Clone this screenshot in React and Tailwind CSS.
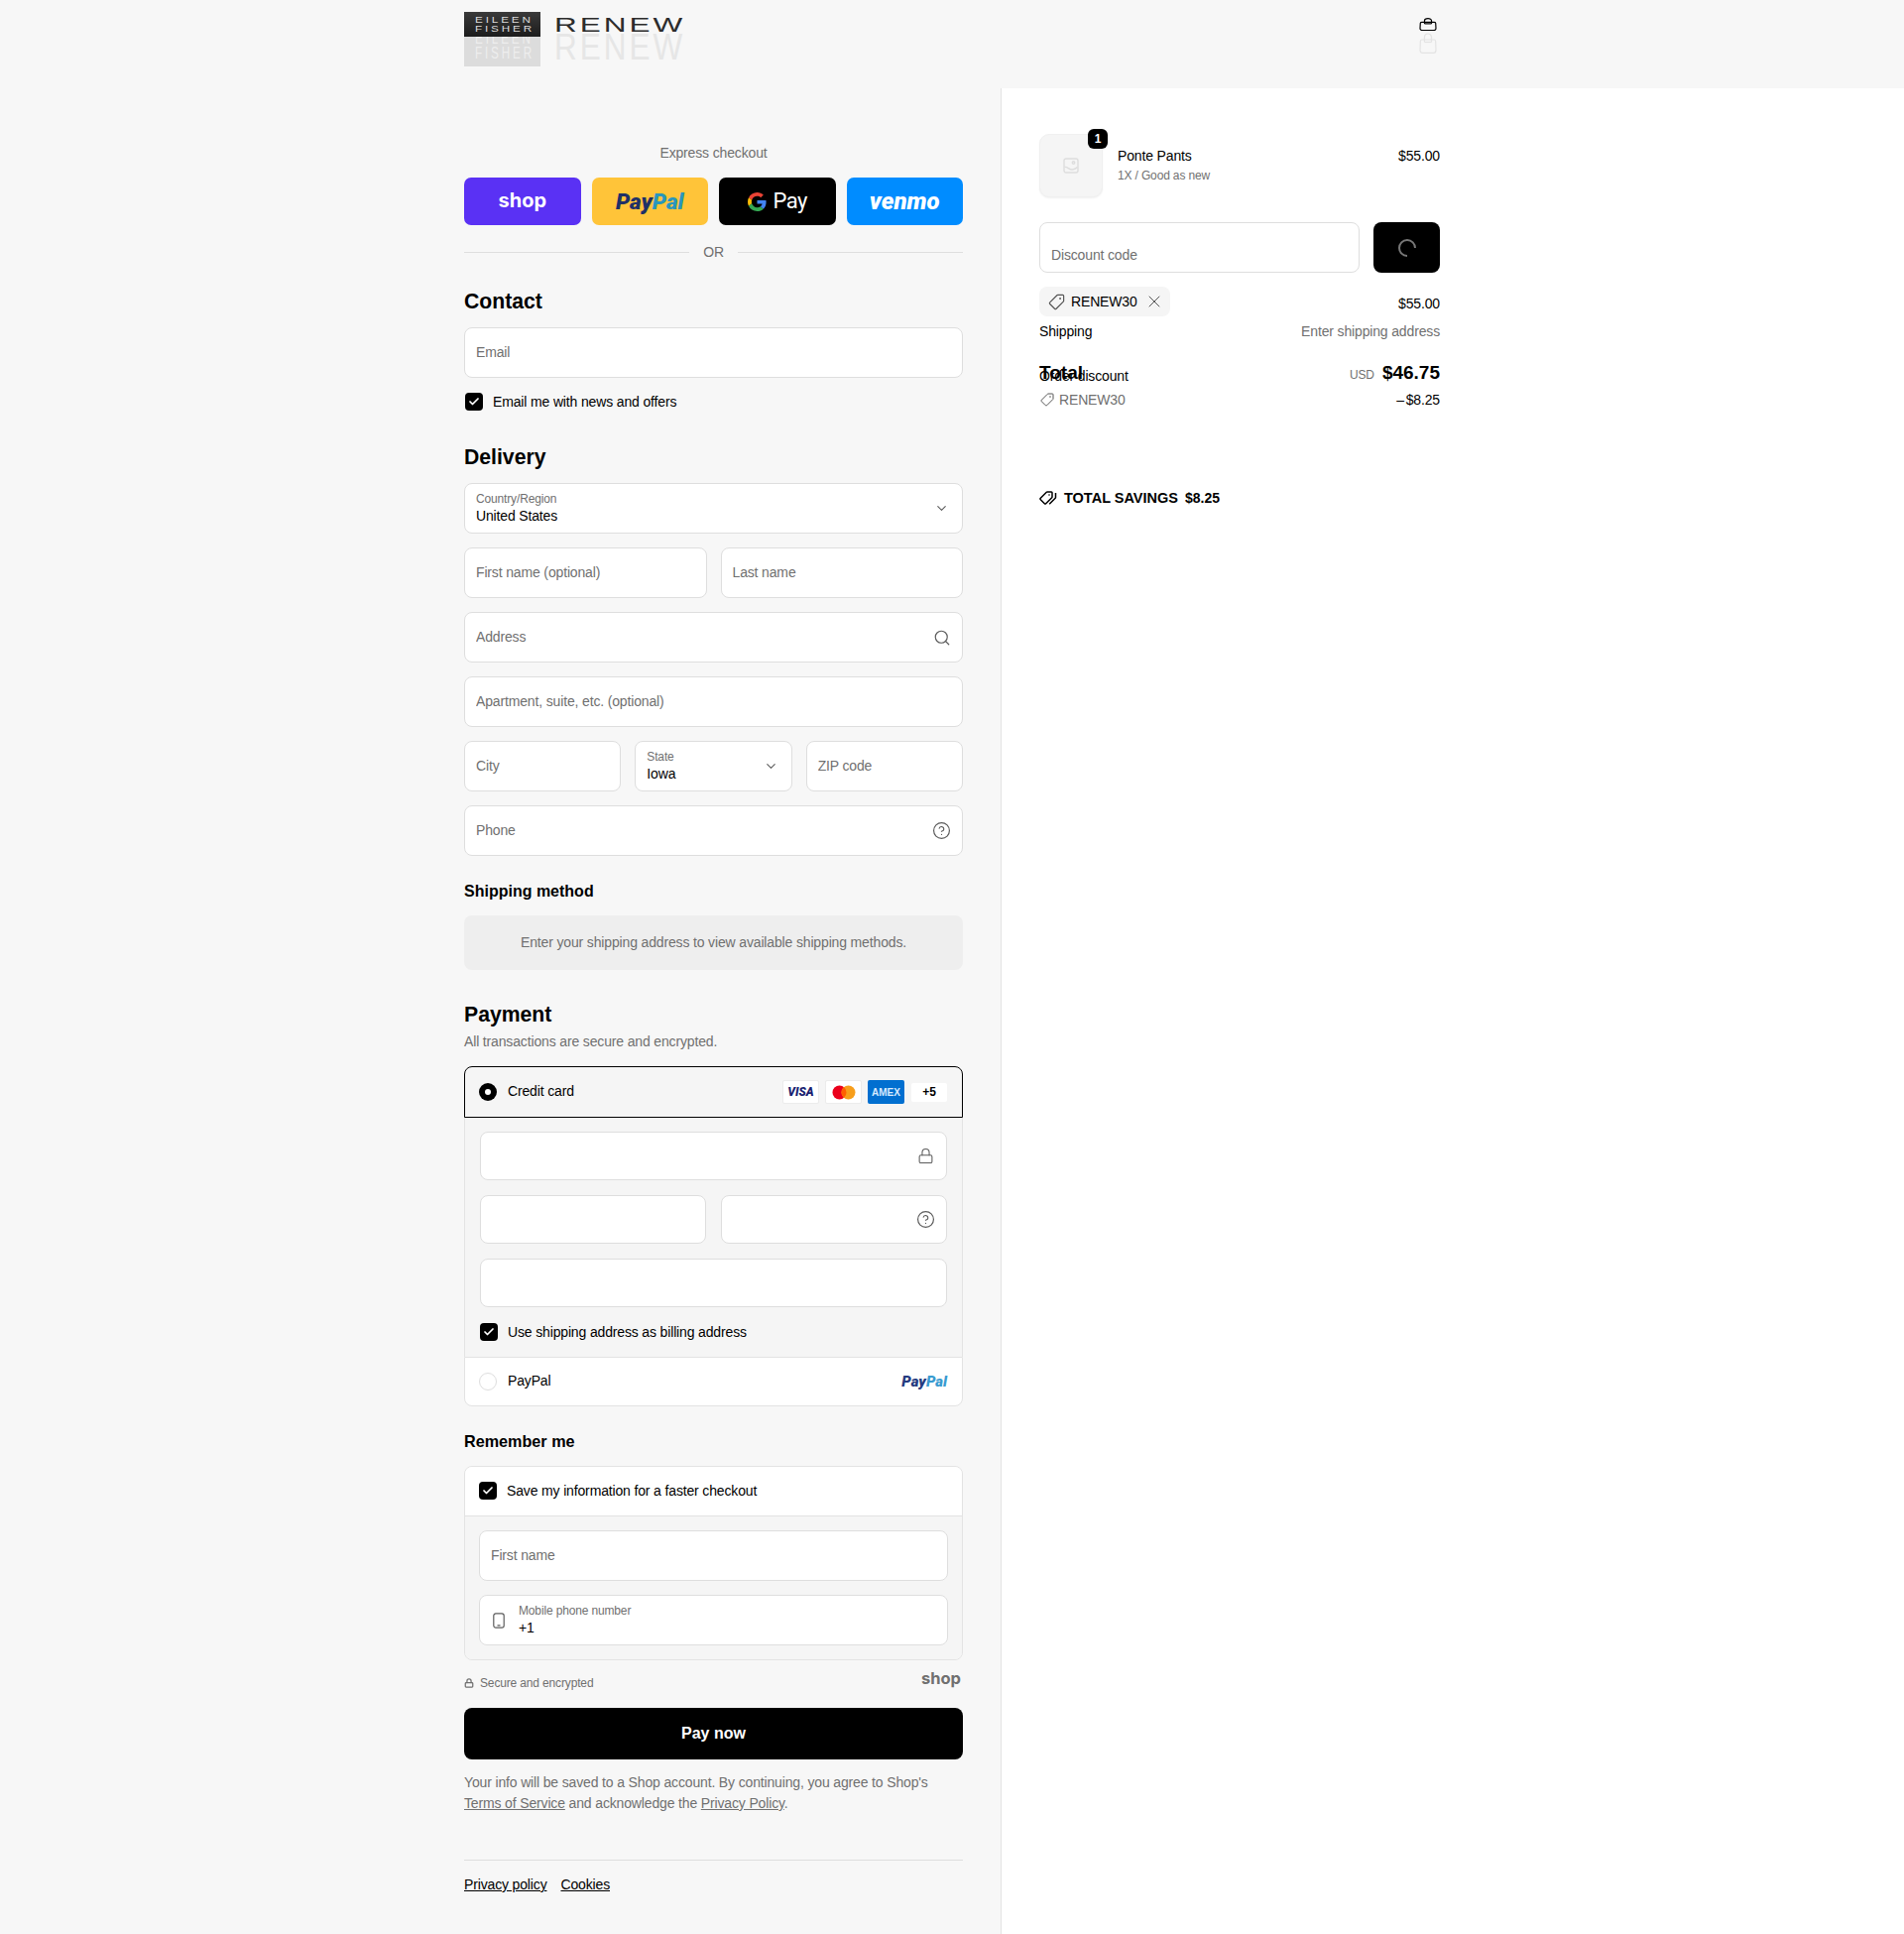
import { Check, ChevronDown, CircleHelp, Lock, Search, X } from "lucide-react";

function TagIcon({ className }) {
  return (
    <svg viewBox="0 0 16 16" fill="none" stroke="currentColor" strokeWidth="1" className={className}>
      <path d="M9 2h4.2a.8.8 0 0 1 .8.8V7a1 1 0 0 1-.3.7l-6 6a1 1 0 0 1-1.4 0L2.3 9.7a1 1 0 0 1 0-1.4l6-6A1 1 0 0 1 9 2z" />
      <circle cx="11" cy="5" r="0.8" fill="currentColor" stroke="none" />
    </svg>
  );
}

function BagIcon({ className }) {
  return (
    <svg viewBox="0 0 18 21" preserveAspectRatio="none" fill="none" stroke="currentColor" strokeWidth="1.2" className={className}>
      <path vectorEffect="non-scaling-stroke" d="M3 7h12c1 0 1.6.6 1.7 1.5l.3 9c0 1.6-1 2.9-2.5 2.9h-11C2 20.4 1 19.1 1 17.5l.3-9C1.4 7.6 2 7 3 7z" />
      <path vectorEffect="non-scaling-stroke" d="M5.5 9.5V4.5a3.5 3.5 0 0 1 7 0v5" />
      <path vectorEffect="non-scaling-stroke" d="M5.5 9.5h7" />
    </svg>
  );
}

function GoogleG() {
  return (
    <svg viewBox="0 0 48 48" className="h-[19px] w-[19px]">
      <path fill="#EA4335" d="M24 9.5c3.54 0 6.71 1.22 9.21 3.6l6.85-6.85C35.9 2.38 30.47 0 24 0 14.62 0 6.51 5.38 2.56 13.22l7.98 6.19C12.43 13.72 17.74 9.5 24 9.5z" />
      <path fill="#4285F4" d="M46.98 24.55c0-1.57-.15-3.09-.38-4.55H24v9.02h12.94c-.58 2.96-2.26 5.48-4.78 7.18l7.73 6c4.51-4.18 7.09-10.36 7.09-17.65z" />
      <path fill="#FBBC05" d="M10.53 28.59c-.48-1.45-.76-2.99-.76-4.59s.27-3.14.76-4.59l-7.98-6.19C.92 16.46 0 20.12 0 24c0 3.88.92 7.54 2.56 10.78l7.97-6.19z" />
      <path fill="#34A853" d="M24 48c6.48 0 11.93-2.13 15.89-5.81l-7.73-6c-2.15 1.45-4.92 2.3-8.16 2.3-6.26 0-11.57-4.22-13.47-9.91l-7.98 6.19C6.51 42.62 14.62 48 24 48z" />
    </svg>
  );
}

function Logo() {
  return (
    <div className="relative h-[55px] w-[225px] overflow-hidden tracking-normal">
      {/* faded copy sits behind the real logo */}
      <div className="absolute left-0 top-0 h-[55px] w-[77px] bg-[#dcdcdc]" />
      <span className="absolute left-[11px] top-[19px] origin-top-left scale-x-[1.3] scale-y-[1.8] text-[9px] leading-[9px] tracking-[2.2px] text-[#eeeeee]">EILEEN</span>
      <span className="absolute left-[11px] top-[34px] origin-top-left scale-x-[1.3] scale-y-[1.8] text-[9px] leading-[9px] tracking-[2.2px] text-[#eeeeee]">FISHER</span>
      <span className="absolute left-[91px] top-[16px] origin-top-left scale-x-[1.5] scale-y-[1.8] text-[21px] leading-[21px] tracking-[2px] text-[#e6e6e6]">RENEW</span>
      <div className="absolute left-0 top-0 h-[25px] w-[77px] bg-gradient-to-b from-[#3a3a3a] to-[#1c1c1c]" />
      <span className="absolute left-[11px] top-[4px] origin-top-left scale-x-[1.3] text-[9px] leading-[9px] tracking-[2.2px] text-[#dddddd]">EILEEN</span>
      <span className="absolute left-[11px] top-[13px] origin-top-left scale-x-[1.3] text-[9px] leading-[9px] tracking-[2.2px] text-[#dddddd]">FISHER</span>
      <span className="absolute left-[91px] top-[2px] origin-top-left scale-x-[1.5] text-[21px] leading-[21px] tracking-[2px] text-[#2c2c2c]">RENEW</span>
    </div>
  );
}

function Field({ placeholder, className = "", icon, inputClass = "pb-[2px]", height = "h-[51px]" }) {
  return (
    <div className={`flex items-center rounded-[8px] border border-[#dedede] bg-white ${height} ${className}`}>
      <input
        placeholder={placeholder}
        className={`h-full min-w-0 flex-1 bg-transparent pl-[11px] text-[14px] outline-none placeholder:text-[#707070] ${inputClass}`}
      />
      {icon && <span className="mr-[11px] flex text-[#5c5c5c]">{icon}</span>}
    </div>
  );
}

function Select({ label, value }) {
  return (
    <div className="flex h-[51px] items-center justify-between rounded-[8px] border border-[#dedede] bg-white pl-[11px] pr-[13px]">
      <div className="flex flex-col pb-[2px]">
        <span className="text-[12px] leading-[16px] text-[#707070]">{label}</span>
        <span className="text-[14px] leading-[18px]">{value}</span>
      </div>
      <ChevronDown size={15} strokeWidth={1.8} className="text-[#5c5c5c]" />
    </div>
  );
}

function CheckRow({ children, className = "" }) {
  return (
    <label className={`flex items-center gap-[10px] text-[14px] leading-[18px] ${className}`}>
      <span className="flex h-[18px] w-[18px] shrink-0 items-center justify-center rounded-[4px] bg-black">
        <Check size={12} strokeWidth={3.5} className="text-white" />
      </span>
      {children}
    </label>
  );
}

function CardBadge({ children, className = "" }) {
  return (
    <span className={`flex h-[24px] w-[37px] items-center justify-center rounded-[2px] ${className}`}>{children}</span>
  );
}

function ExpressButton({ className, children }) {
  return <div className={`flex h-[48px] items-center justify-center rounded-[7px] ${className}`}>{children}</div>;
}

function Form() {
  return (
    <div className="w-[503px] pt-[55px]">
      <p className="text-center text-[14px] leading-[20px] text-[#707070]">Express checkout</p>
      <div className="mt-[15px] grid grid-cols-4 gap-[11px] tracking-normal">
        <ExpressButton className="bg-[#5a31f4] text-white">
          <span className="pb-[2px] font-['Inter'] text-[20px] font-bold leading-none">shop</span>
        </ExpressButton>
        <ExpressButton className="bg-[#ffc439]">
          <span className="font-['Roboto'] text-[22.5px] font-black italic leading-none text-[#1f3066]">
            Pay<span className="text-[#2a96bb]">Pal</span>
          </span>
        </ExpressButton>
        <ExpressButton className="gap-[7px] bg-black text-white">
          <GoogleG />
          <span className="font-['Roboto'] text-[22px] leading-none tracking-[-0.5px]">Pay</span>
        </ExpressButton>
        <ExpressButton className="bg-[#008cff] text-white">
          <span className="font-['Roboto'] text-[24px] font-black italic leading-none">venmo</span>
        </ExpressButton>
      </div>
      <div className="mt-[17px] flex items-center gap-[14px] text-[14px] leading-[20px] text-[#707070]">
        <span className="h-px flex-1 bg-[#dedede]" />
        OR
        <span className="h-px flex-1 bg-[#dedede]" />
      </div>

      <h2 className="mt-[26px] text-[21.2px] font-bold leading-[28px] tracking-normal">Contact</h2>
      <Field placeholder="Email" className="mt-[12px]" />
      <CheckRow className="ml-px mt-[15px]">Email me with news and offers</CheckRow>

      <h2 className="mt-[33px] text-[21.2px] font-bold leading-[28px] tracking-normal">Delivery</h2>
      <div className="mt-[12px] flex flex-col gap-[14px]">
        <Select label="Country/Region" value="United States" />
        <div className="grid grid-cols-2 gap-[14px]">
          <Field placeholder="First name (optional)" />
          <Field placeholder="Last name" />
        </div>
        <Field placeholder="Address" icon={<Search size={18} strokeWidth={1.6} />} />
        <Field placeholder="Apartment, suite, etc. (optional)" />
        <div className="grid grid-cols-3 gap-[14px]">
          <Field placeholder="City" />
          <Select label="State" value="Iowa" />
          <Field placeholder="ZIP code" />
        </div>
        <Field placeholder="Phone" icon={<CircleHelp size={19} strokeWidth={1.5} />} />
      </div>

      <h3 className="mt-[24px] text-[16px] font-bold leading-[24px] tracking-normal">Shipping method</h3>
      <div className="mt-[12px] flex h-[55px] items-center justify-center rounded-[8px] bg-[#eeeeee] pb-[1px] text-[14px] text-[#707070]">
        Enter your shipping address to view available shipping methods.
      </div>

      <h2 className="mt-[31px] text-[21.2px] font-bold leading-[28px] tracking-normal">Payment</h2>
      <p className="mt-[3px] text-[14px] leading-[20px] text-[#707070]">All transactions are secure and encrypted.</p>
      <div className="mt-[15px]">
        <div className="flex h-[52px] items-center rounded-t-[8px] border border-black bg-[#f5f5f5] pl-[14px] pr-[15px]">
          <span className="flex h-[18px] w-[18px] items-center justify-center rounded-full bg-black">
            <span className="h-[6px] w-[6px] rounded-full bg-white" />
          </span>
          <span className="ml-[11px] flex-1 pb-[2px] text-[14px]">Credit card</span>
          <div className="flex items-center gap-[6px] tracking-normal">
            <CardBadge className="border border-[#ececec] bg-white">
              <span className="font-['Roboto'] text-[12px] font-black italic text-[#1a1f71]">VISA</span>
            </CardBadge>
            <CardBadge className="border border-[#ececec] bg-white">
              <svg viewBox="0 0 24 15" className="h-[15px] w-[24px]">
                <circle cx="7.5" cy="7.5" r="7" fill="#eb001b" />
                <circle cx="16.5" cy="7.5" r="7" fill="#f79e1b" />
                <path d="M12 2.1a7 7 0 0 1 0 10.8a7 7 0 0 1 0-10.8z" fill="#ff5f00" />
              </svg>
            </CardBadge>
            <CardBadge className="bg-[#016fd0]">
              <span className="text-[10px] font-bold text-[#d7ebff]">AMEX</span>
            </CardBadge>
            <span className="ml-px flex h-[19px] w-[36px] items-center justify-center rounded-[2px] bg-white text-[12px] font-bold">+5</span>
          </div>
        </div>
        <div className="flex flex-col gap-[15px] border-x border-[#e3e3e3] bg-[#f5f5f5] px-[15px] pb-[16px] pt-[14px]">
          <Field height="h-[49px]" icon={<Lock size={17} strokeWidth={1.5} className="mr-[1px]" />} />
          <div className="grid grid-cols-2 gap-[15px]">
            <Field height="h-[49px]" />
            <Field height="h-[49px]" icon={<CircleHelp size={19} strokeWidth={1.5} />} />
          </div>
          <Field height="h-[49px]" />
          <CheckRow className="mt-[1px]">Use shipping address as billing address</CheckRow>
        </div>
        <div className="flex h-[50px] items-center rounded-b-[8px] border border-[#e3e3e3] bg-white pl-[14px] pr-[15px]">
          <span className="h-[18px] w-[18px] rounded-full border border-[#dedede] bg-white" />
          <span className="ml-[11px] flex-1 pb-[1px] text-[14px]">PayPal</span>
          <span className="font-['Roboto'] text-[15px] font-black italic tracking-normal text-[#253b80]">
            Pay<span className="text-[#3a9bd0]">Pal</span>
          </span>
        </div>
      </div>

      <h3 className="mt-[23px] text-[16.2px] font-bold leading-[24px] tracking-normal">Remember me</h3>
      <div className="mt-[13px] overflow-hidden rounded-[8px] border border-[#e3e3e3]">
        <div className="flex h-[50px] items-center border-b border-[#e3e3e3] bg-white pb-[1px] pl-[14px]">
          <CheckRow>Save my information for a faster checkout</CheckRow>
        </div>
        <div className="flex flex-col gap-[14px] bg-[#f5f5f5] p-[14px]">
          <Field placeholder="First name" />
          <div className="flex h-[51px] items-center rounded-[8px] border border-[#dedede] bg-white pl-[13px]">
            <svg viewBox="0 0 12 16" fill="none" stroke="#5c5c5c" strokeWidth="1.2" className="h-[16px] w-[12px]">
              <rect x="0.8" y="0.8" width="10.4" height="14.4" rx="2.2" />
              <path d="M4.5 12.8h3" />
            </svg>
            <div className="ml-[14px] flex flex-col pb-[2px]">
              <span className="text-[12px] leading-[16px] text-[#707070]">Mobile phone number</span>
              <span className="text-[14px] leading-[18px]">+1</span>
            </div>
          </div>
        </div>
      </div>

      <div className="mt-[11px] flex h-[20px] items-end justify-between">
        <span className="flex items-center gap-[6px] text-[12px] leading-[16px] text-[#707070]">
          <Lock size={10} strokeWidth={3} />
          Secure and encrypted
        </span>
        <span className="pb-[3px] pr-[2px] font-['Inter'] text-[16.5px] font-bold leading-[20px] tracking-normal text-[#707070]">shop</span>
      </div>
      <button className="mt-[17px] h-[52px] w-full rounded-[8px] bg-black pb-[1px] text-[16px] font-bold tracking-normal text-white">Pay now</button>
      <p className="mt-[13px] text-[14px] leading-[21px] text-[#707070]">
        Your info will be saved to a Shop account. By continuing, you agree to Shop's <span className="underline">Terms of Service</span> and acknowledge the <span className="underline">Privacy Policy</span>.
      </p>
      <div className="mt-[46px] flex gap-[14px] border-t border-[#dedede] pt-[14px] text-[14px] leading-[20px]">
        <span className="underline">Privacy policy</span>
        <span className="underline">Cookies</span>
      </div>
    </div>
  );
}

function Summary() {
  return (
    <div className="w-[404px] pt-[46px] text-[14px] leading-[20px]">
      <div className="flex items-start">
        <div className="relative flex h-[64px] w-[64px] items-center justify-center rounded-[10px] border border-[#f0f0f0] bg-[#f5f5f5] shadow-[0_1px_2px_rgba(0,0,0,0.06)]">
          <svg viewBox="0 0 16 16" fill="none" stroke="#dddddd" strokeWidth="1.4" className="h-[16px] w-[16px]">
            <rect x="1" y="1" width="14" height="14" rx="2" />
            <path d="M1.5 9.5c3-1 4.5 3 8 2.5s4-2 5-2.5" />
            <circle cx="10.5" cy="5" r="1.2" />
          </svg>
          <span className="absolute -right-[6px] -top-[6px] flex h-[20px] w-[20px] items-center justify-center rounded-[6px] bg-black text-[12px] font-bold text-white">1</span>
        </div>
        <div className="ml-[15px] flex-1 pt-[12px]">
          <p>Ponte Pants</p>
          <p className="text-[12px] leading-[20px] text-[#707070]">1X / Good as new</p>
        </div>
        <span className="pt-[12px]">$55.00</span>
      </div>

      <div className="mt-[25px] flex gap-[14px]">
        <Field placeholder="Discount code" className="flex-1" inputClass="pt-[15px]" />
        <div className="flex h-[51px] w-[67px] items-center justify-center rounded-[8px] bg-black">
          <svg viewBox="0 0 18 18" fill="none" stroke="#777777" strokeWidth="2" className="h-[18px] w-[18px]">
            <path d="M17 9A8 8 0 1 0 9 17" />
          </svg>
        </div>
      </div>

      <div className="mt-[14px] flex items-start justify-between">
        <span className="flex h-[30px] items-center rounded-[8px] bg-[#f5f5f5] pl-[8px] pr-[6px]">
          <TagIcon className="h-[19px] w-[19px] text-[#555555]" />
          <span className="ml-[5px]">RENEW30</span>
          <X size={20} strokeWidth={1.2} className="ml-[7px] text-[#555555]" />
        </span>
        <span className="pt-[7px]">$55.00</span>
      </div>
      <div className="mt-[5px] flex justify-between">
        <span>Shipping</span>
        <span className="text-[#707070]">Enter shipping address</span>
      </div>
      <div className="mt-[18px] flex items-center justify-between">
        <span className="text-[19px] font-bold leading-[28px] tracking-normal">Total</span>
        <span className="flex items-center gap-[8px]">
          <span className="pt-[4px] text-[12px] text-[#707070]">USD</span>
          <span className="text-[19px] font-bold leading-[28px] tracking-normal">$46.75</span>
        </span>
      </div>
      {/* the discount row really does run under the total in this layout */}
      <p className="-mt-[21px]">Order discount</p>
      <div className="mt-[4px] flex justify-between">
        <span className="flex items-center gap-[4px] text-[#707070]">
          <TagIcon className="h-[16px] w-[16px] text-[#555555]" />
          RENEW30
        </span>
        <span className="[word-spacing:-2px]">– $8.25</span>
      </div>
      <div className="mt-[79px] flex items-center font-bold tracking-normal">
        <svg viewBox="0 0 18 16" fill="none" stroke="black" strokeWidth="1.5" className="h-[16px] w-[18px]">
          <path d="M8 2h4.2a.8.8 0 0 1 .8.8V7a1 1 0 0 1-.3.7l-6 6a1 1 0 0 1-1.4 0L1.3 9.7a1 1 0 0 1 0-1.4l6-6A1 1 0 0 1 8 2z" />
          <path d="M16.5 3v4.5a1 1 0 0 1-.3.7l-6 6" />
          <circle cx="10" cy="5" r="0.8" fill="black" stroke="none" />
        </svg>
        <span className="ml-[7px] text-[14.5px]">TOTAL SAVINGS</span>
        <span className="ml-[7px]">$8.25</span>
      </div>
    </div>
  );
}

export default function App() {
  return (
    <div className="min-h-[1950px] bg-[#f7f7f7] font-['Liberation_Sans',Arial,sans-serif] tracking-[-0.15px] text-black">
      <header className="h-[89px]">
        <div className="mx-auto flex w-[984px] items-start justify-between pt-[12px]">
          <Logo />
          <div className="flex flex-col gap-[2px] pr-[3px] pt-[6px]">
            <BagIcon className="h-[13px] w-[18px] text-black" />
            <BagIcon className="h-[21px] w-[18px] text-[#e3e3e3]" />
          </div>
        </div>
      </header>
      <main className="flex min-h-[1861px]">
        <div className="flex w-[1009px] shrink-0 justify-end pr-[38px]">
          <Form />
        </div>
        <div className="flex-1 border-l border-[#e3e3e3] bg-white pl-[38px]">
          <Summary />
        </div>
      </main>
    </div>
  );
}
